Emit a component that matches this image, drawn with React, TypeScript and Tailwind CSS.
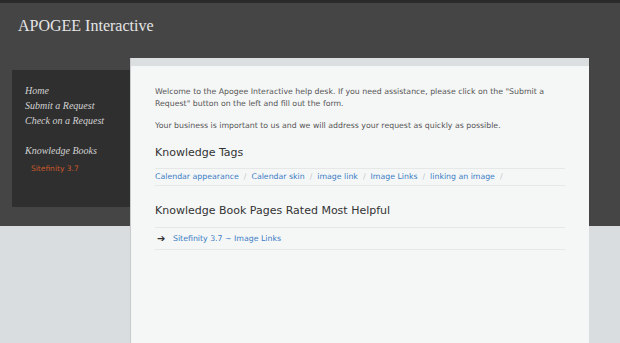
export default function App() {
  const tags = ["Calendar appearance", "Calendar skin", "image link", "Image Links", "linking an image"];
  return (
    <div className="h-[343px] w-[620px] overflow-hidden border-t-[3px] border-[#2a2a2a] bg-[linear-gradient(#454545_0_223px,#d9dddf_223px)]">
      {/* Header */}
      <div className="pl-[18px] pt-[14px] h-[55px] font-['Liberation_Serif',serif] text-[16px] leading-[18px] text-[#e6e6e6]">
        APOGEE Interactive
      </div>

      <div className="flex items-start pl-[12px]">
        {/* Sidebar */}
        <div className="mt-[12px] h-[137px] w-[118px] bg-[#2f2f2f] pl-[13px] pt-[13px] font-['Liberation_Serif',serif] italic text-[10px] leading-[15px] text-[#d2d2d2]">
          <div>Home</div>
          <div>Submit a Request</div>
          <div>Check on a Request</div>
          <div className="mt-[15px]">Knowledge Books</div>
          <div className="mt-[3px] pl-[6px] font-['DejaVu_Sans',sans-serif] not-italic text-[7.5px] text-[#c9582b]">
            Sitefinity 3.7
          </div>
        </div>

        {/* Main panel */}
        <div className="h-[300px] w-[459px] border-l border-[#c8cbcc] bg-[#f5f7f7]">
          <div className="h-[8px] bg-[#dcdfe0]" />
          <div className="px-[24px] pt-[20px] font-['DejaVu_Sans',sans-serif] text-[7.8px] leading-[12px] text-[#555]">
            <p>
              Welcome to the Apogee Interactive help desk. If you need assistance, please click on the "Submit a
              Request" button on the left and fill out the form.
            </p>
            <p className="mt-[10px]">Your business is important to us and we will address your request as quickly as possible.</p>

            <h2 className="mt-[14px] text-[11px] leading-[14px] font-medium text-[#333]">Knowledge Tags</h2>
            <div className="mt-[8px] flex h-[18px] items-center border-y border-[#e6e8e8] text-[#3b7cc4]">
              {tags.map((t) => (
                <span key={t} className="flex items-center">
                  {t}
                  <span className="mx-[5px] text-[#c4c6c7]">/</span>
                </span>
              ))}
            </div>

            <h2 className="mt-[18px] text-[11px] leading-[14px] font-medium text-[#333]">
              Knowledge Book Pages Rated Most Helpful
            </h2>
            <div className="mt-[9px] flex h-[23px] items-center border-y border-[#e6e8e8]">
              <span className="ml-[2px] w-[16px] text-[10px] text-[#333]">➔</span>
              <span className="text-[#3b7cc4]">Sitefinity 3.7 ~ Image Links</span>
            </div>
          </div>
        </div>
      </div>
    </div>
  );
}
